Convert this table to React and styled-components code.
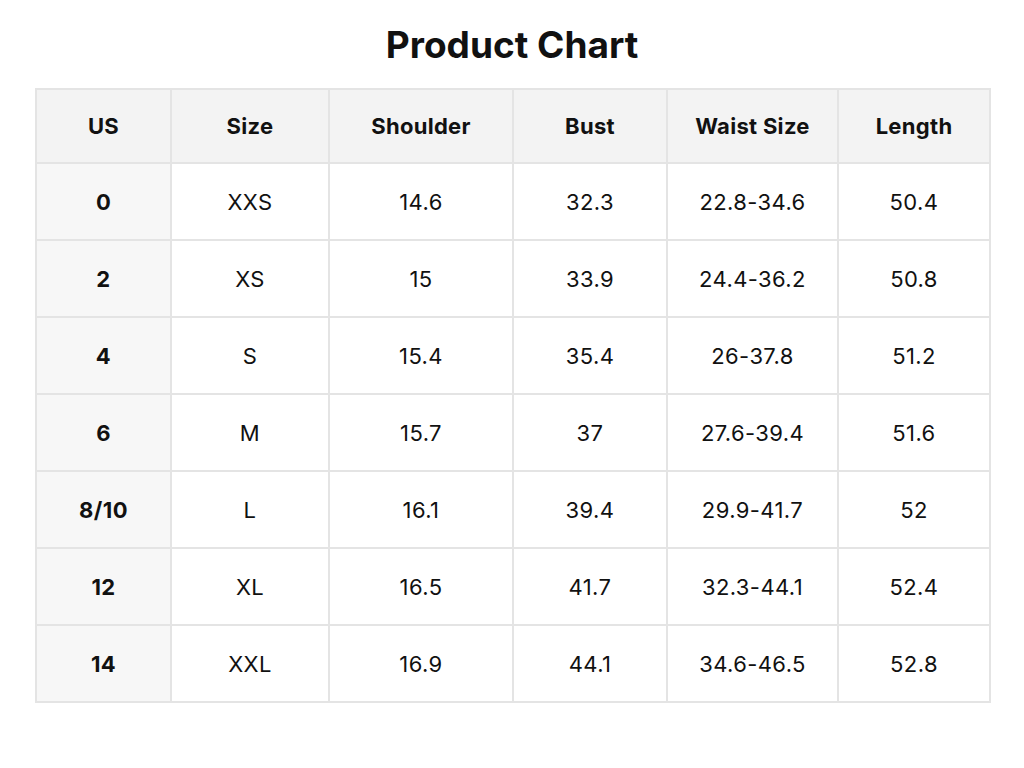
import React from "react";
import styled, { createGlobalStyle } from "styled-components";

const Global = createGlobalStyle`
  html, body { margin: 0; padding: 0; background: #ffffff; }
  body { font-family: Inter, "Noto Sans", "Liberation Sans", sans-serif; color: #111; }
`;

const Page = styled.div`
  width: 1024px;
  height: 768px;
  display: flex;
  flex-direction: column;
  align-items: center;
  box-sizing: border-box;
  padding-top: 23px;
`;

const Title = styled.h1`
  margin: 0;
  font-size: 37px;
  font-weight: 700;
  line-height: 44px;
  letter-spacing: 0px;
  color: #111;
`;

const Table = styled.table`
  margin-top: 21px;
  width: 954px;
  border-collapse: collapse;
  table-layout: fixed;
  margin-left: 2px;
`;

const Col = styled.col`
  width: ${(p) => p.$w}px;
`;

const HeadCell = styled.th`
  height: 72px;
  padding: 0;
  background: #f3f3f3;
  border: 2px solid #e4e4e4;
  font-size: 22px;
  letter-spacing: 0.3px;
  font-weight: 700;
  text-align: center;
  color: #111;
`;

const Cell = styled.td`
  height: 75px;
  padding: 0;
  border: 2px solid #e4e4e4;
  font-size: 22px;
  letter-spacing: 0.4px;
  font-weight: ${(p) => (p.$first ? 700 : 400)};
  background: ${(p) => (p.$first ? "#f7f7f7" : "#ffffff")};
  text-align: center;
  color: #111;
`;

const widths = [135, 158, 184, 154, 171, 152];
const headers = ["US", "Size", "Shoulder", "Bust", "Waist Size", "Length"];
const rows = [
  ["0", "XXS", "14.6", "32.3", "22.8-34.6", "50.4"],
  ["2", "XS", "15", "33.9", "24.4-36.2", "50.8"],
  ["4", "S", "15.4", "35.4", "26-37.8", "51.2"],
  ["6", "M", "15.7", "37", "27.6-39.4", "51.6"],
  ["8/10", "L", "16.1", "39.4", "29.9-41.7", "52"],
  ["12", "XL", "16.5", "41.7", "32.3-44.1", "52.4"],
  ["14", "XXL", "16.9", "44.1", "34.6-46.5", "52.8"],
];

export default function App() {
  return (
    <Page>
      <Global />
      <Title>Product Chart</Title>
      <Table>
        <colgroup>
          {widths.map((w, i) => (
            <Col key={i} $w={w} />
          ))}
        </colgroup>
        <thead>
          <tr>
            {headers.map((h) => (
              <HeadCell key={h}>{h}</HeadCell>
            ))}
          </tr>
        </thead>
        <tbody>
          {rows.map((r) => (
            <tr key={r[0]}>
              {r.map((c, i) => (
                <Cell key={i} $first={i === 0}>
                  {c}
                </Cell>
              ))}
            </tr>
          ))}
        </tbody>
      </Table>
    </Page>
  );
}
